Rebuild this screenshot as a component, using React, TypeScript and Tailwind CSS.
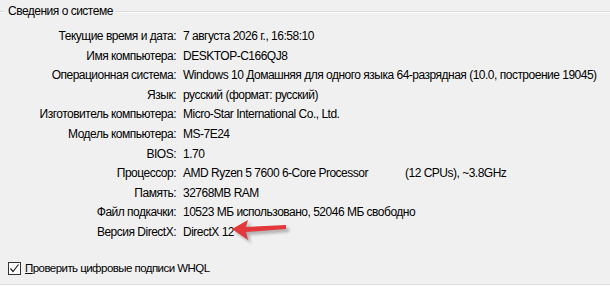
import React from "react";

const rows: { label: string; value: React.ReactNode }[] = [
  { label: "Текущие время и дата:", value: "7 августа 2026 г., 16:58:10" },
  { label: "Имя компьютера:", value: "DESKTOP-C166QJ8" },
  {
    label: "Операционная система:",
    value: "Windows 10 Домашняя для одного языка 64-разрядная (10.0, построение 19045)",
  },
  { label: "Язык:", value: "русский (формат: русский)" },
  { label: "Изготовитель компьютера:", value: "Micro-Star International Co., Ltd." },
  { label: "Модель компьютера:", value: "MS-7E24" },
  { label: "BIOS:", value: "1.70" },
  {
    label: "Процессор:",
    value: (
      <span className="flex">
        <span className="w-[222px]">AMD Ryzen 5 7600 6-Core Processor</span>
        <span>(12 CPUs), ~3.8GHz</span>
      </span>
    ),
  },
  { label: "Память:", value: "32768MB RAM" },
  { label: "Файл подкачки:", value: "10523 МБ использовано, 52046 МБ свободно" },
  {
    label: "Версия DirectX:",
    value: (
      <span className="relative">
        DirectX 12
        <RedArrow />
      </span>
    ),
  },
];

function RedArrow() {
  return (
    <svg
      className="absolute left-[47px] top-[-6px]"
      width="64"
      height="28"
      viewBox="0 0 64 28"
    >
      <defs>
        <filter id="blur" x="-20%" y="-40%" width="140%" height="180%">
          <feGaussianBlur stdDeviation="1.6" />
        </filter>
      </defs>
      <g fill="#7a7a7a" opacity="0.55" filter="url(#blur)" transform="translate(3 3)">
        <path d="M2 10 L18 1 L16 8 L56 6 L56 10 L16 13 L18 21 Z" />
      </g>
      <path d="M2 10 L18 1 L16 8 L56 6 L56 10 L16 13 L18 21 Z" fill="#e2373b" />
    </svg>
  );
}

export default function App() {
  return (
    <div
      className="w-[610px] h-[286px] bg-[#f0f0f0] text-black text-[12px] tracking-[-0.5px] flex flex-col"
      style={{ fontFamily: '"Liberation Sans", Arial, sans-serif' }}
    >
      <div className="flex items-center h-[16px] mt-[3px]">
        <div className="w-[5px] border-t border-[#dcdcdc] shadow-[0_1px_0_#ffffff]" />
        <span className="px-[3px]">Сведения о системе</span>
        <div className="flex-1 border-t border-[#dcdcdc] shadow-[0_1px_0_#ffffff]" />
      </div>

      <div className="grid grid-cols-[176px_1fr] gap-x-[7px] mt-[8px]">
        {rows.map((row) => (
          <React.Fragment key={row.label}>
            <div className="text-right leading-[19.6px] whitespace-nowrap">{row.label}</div>
            <div className="leading-[19.6px] whitespace-nowrap">{row.value}</div>
          </React.Fragment>
        ))}
      </div>

      <label className="flex items-center gap-[4px] ml-[8px] mt-[17px]">
        <span className="w-[13px] h-[13px] border border-[#333333] bg-white flex items-center justify-center">
          <svg width="11" height="11" viewBox="0 0 11 11">
            <path d="M1.5 5.5 L4 8.5 L9.5 1.5" fill="none" stroke="#222" strokeWidth="1.2" />
          </svg>
        </span>
        <span className="text-[11.5px] tracking-[-0.55px]">
          <span className="underline">П</span>роверить цифровые подписи WHQL
        </span>
      </label>

      <div className="mt-auto mb-[1px] border-b border-[#dcdcdc] shadow-[0_1px_0_#ffffff]" />
    </div>
  );
}
